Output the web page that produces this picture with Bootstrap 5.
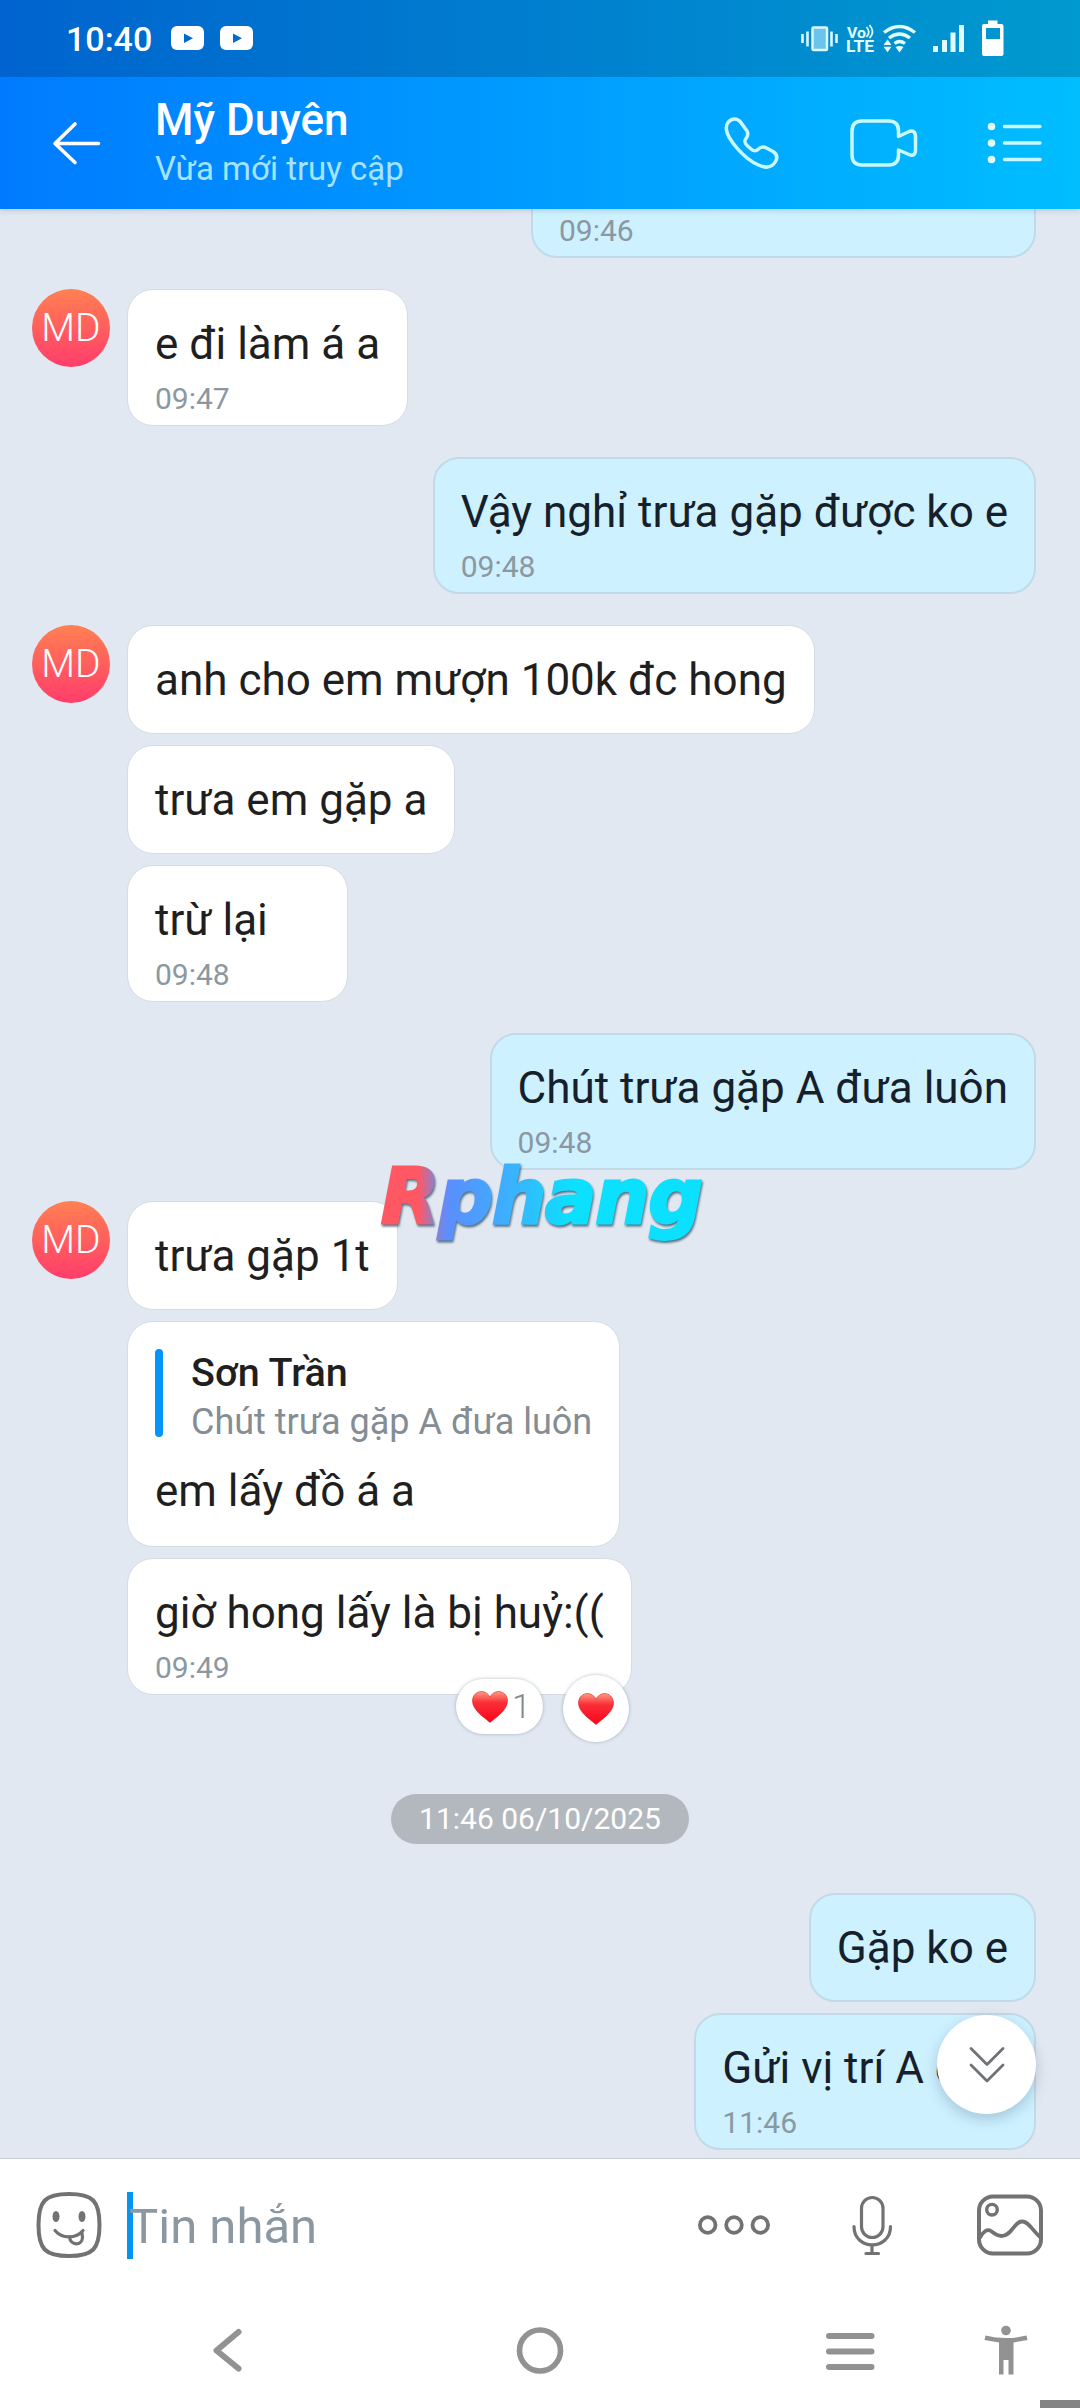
<!DOCTYPE html>
<html lang="vi">
<head>
<meta charset="utf-8">
<meta name="viewport" content="width=device-width, initial-scale=1">
<title>Mỹ Duyên</title>
<link href="https://cdn.jsdelivr.net/npm/bootstrap@5.3.0/dist/css/bootstrap.min.css" rel="stylesheet">
<style>
  body { font-family: Roboto, "Noto Sans", sans-serif; background: #e1e8f1; color: #1f1f1f; }
  svg { display: block; flex: none; overflow: visible; }
  .phone { width: 1080px; height: 2408px; }
  .top-area { background: linear-gradient(90deg, #007bff, #00beff); color: #fff; z-index: 3; box-shadow: 0 1px 6px rgba(60,80,110,.25); }
  .status { height: 77px; background: rgba(0,0,0,.19); padding-left: 66px; }
  .clock { font-size: 34px; font-weight: 500; line-height: 40px; width: 104px; margin-top: 19px; }
  .title-bar { height: 132px; padding-left: 52px; }
  .who { width: 569px; margin-left: 54px; padding-top: 17px; }
  .who-name { font-size: 44px; font-weight: 500; line-height: 53px; }
  .who-seen { font-size: 33px; line-height: 44px; color: #a5e3ff; }
  .chat { padding: 0 44px 0 127px; overflow: hidden; }
  .bubble { background: #fff; border: 1px solid #d5dce4; border-radius: 26px; padding: 21px 27px 0; height: 109px; }
  .bubble.timed { height: 137px; }
  .bubble.quoted { height: 226px; padding-top: 27px; }
  .bubble.mine { background: #cdf1ff; border: 2px solid #c2dae7; padding: 20px 26px 0; color: #16202a; }
  .bubble.cut { width: 505px; height: 150px; margin-top: -101px; }
  .bubble.wide { width: 221px; }
  .say { font-size: 44px; line-height: 66px; white-space: nowrap; }
  .stamp { font-size: 30px; line-height: 36px; margin-top: 4px; color: #8b98a2; }
  .cut .stamp { margin-top: 17px; }
  .group-gap { margin-top: 31px; }
  .near-gap { margin-top: 11px; }
  .far-gap { margin-top: 49px; }
  .face { width: 78px; height: 78px; left: -95px; top: 0; border-radius: 50%; background: linear-gradient(#ff8052, #ff3d6b); color: #fff; font-size: 39px; font-weight: 300; line-height: 78px; }
  .quote-bar { width: 8px; height: 88px; border-radius: 4px; background: #0594fa; margin-right: 28px; }
  .quote-box { margin-bottom: 21px; height: 88px; }
  .quote-name { font-size: 39.5px; font-weight: 500; line-height: 47px; }
  .quote-text { font-size: 36px; line-height: 46px; color: #858d94; white-space: nowrap; margin-top: 3px; }
  .react { background: #fff; box-shadow: 0 0 3px 1px rgba(110,120,135,.3); }
  .react-count { left: 329px; top: 121px; width: 87px; height: 55px; border-radius: 28px; padding-left: 16px; }
  .react-add { left: 436px; top: 117px; width: 66px; height: 67px; border-radius: 50%; }
  .react-num { font-size: 34px; font-weight: 300; color: #888; margin-left: 4px; }
  .day { height: 50px; width: 298px; margin: 99px auto 0 264px; border-radius: 25px; background: #b2b8be; color: #fff; font-size: 30px; line-height: 50px; }
  .watermark { left: 379px; top: 1152px; padding: 0 8px 0 2px; font: italic bold 76px/90px "DejaVu Sans", sans-serif; color: transparent; background: linear-gradient(90deg, #ff5864 0 12%, #8b80d0 17%, #5b8eff 21%, #4d9cff 29%, #35b8ff 43%, #0be0ff 58%); -webkit-background-clip: text; background-clip: text; -webkit-text-stroke: 3px transparent; filter: drop-shadow(1px 2px 1px rgba(50,80,100,.8)); z-index: 4; letter-spacing: -1px; white-space: nowrap; }
  .to-end { left: 937px; top: 2015px; width: 99px; height: 99px; border-radius: 50%; background: #fff; box-shadow: 0 5px 14px rgba(60,90,120,.28); z-index: 4; }
  .to-end:hover { background: #fff; }
  .composer { height: 136px; border-top: 1px solid #c9ced5; background: #fff; padding-left: 36px; z-index: 3; }
  .composer svg, .caret { margin-top: -3px; }
  .caret { width: 6px; height: 67px; background: #0594f0; margin-left: 25px; }
  .hint { font-size: 49px; line-height: 66px; color: #8b98a2; width: 570px; margin-left: -4px; }
  .nav-keys { height: 114px; background: #fff; }
</style>
</head>
<body>
<main class="phone d-flex flex-column position-relative overflow-hidden">
  <header class="top-area position-relative flex-shrink-0">
    <div class="status d-flex">
      <div class="clock">10:40</div>
      <svg width="910" height="77" viewBox="170 0 910 77" fill="#fff">
        <rect x="171" y="26" width="33" height="24" rx="6"/><path d="M184 33.500v9.500l9-4.700z" fill="#0069cf"/>
        <rect x="220" y="26" width="33" height="24" rx="6"/><path d="M233 33.500v9.500l9-4.700z" fill="#006bd0"/>
        <rect x="812.500" y="27.500" width="14.500" height="22.500" rx="1" fill="#6cc4ec" stroke="#dcf8ff" stroke-width="2.500"/>
        <path d="M802.500 34v9M807.500 31.500v15M831.500 31.500v15M836.500 34v9" stroke="#dcf8ff" stroke-width="2.600"/>
        <g fill="#e2fbff" font-family="Roboto, sans-serif" font-weight="700"><text x="847" y="37.500" font-size="15.500" textLength="19" lengthAdjust="spacingAndGlyphs">Vo</text><text x="846" y="52.300" font-size="17" textLength="28" lengthAdjust="spacingAndGlyphs">LTE</text></g>
        <path d="M866.500 27q4.500 5 0 10M869.500 25q6 7 0 13" fill="none" stroke="#e2fbff" stroke-width="1.800"/>
        <g fill="none" stroke="#e2fbff" stroke-width="3.400"><path d="M884 32.500q15.500-12 31 0M889 38q10.500-8 21 0M894.500 43.500q5-4 10.500 0"/></g>
        <path d="M883.500 45l4-5.500 4 5.500zM883.500 46.800h8l-4 5.500zM895.500 47g4-2 8 0l-4 5.500z" fill="none"/>
        <path d="M883.500 45l4-5.500 4 5.500zM883.500 46.800h8l-4 5.500zM895.500 47q4-2 8 0l-4 5.500z" fill="#e2fbff"/>
        <path d="M933 46h5v6h-5zM942 40h5v12h-5zM950.500 32.500h5V52h-5zM959 25h5v27h-5z" fill="#e2fbff"/>
        <path d="M988 20.500h9.500V24h4q2 0 2 2v28q0 2-2 2H984q-2 0-2-2V26q0-2 2-2h4zM986 28v11h14V28z" fill-rule="evenodd"/>
      </svg>
    </div>
    <div class="title-bar d-flex">
      <svg width="49" height="132" viewBox="52 77 49 132" fill="none" stroke="#fff" stroke-width="3.600" stroke-linecap="round" stroke-linejoin="round"><path d="M98.500 143.500H55M75 124L55 143.500 75 162.500"/></svg>
      <div class="who">
        <div class="who-name">Mỹ Duyên</div>
        <div class="who-seen">Vừa mới truy cập</div>
      </div>
      <svg width="320" height="132" viewBox="724 77 320 132" fill="none" stroke="#caf8ff" stroke-width="3.500" stroke-linejoin="round" stroke-linecap="round">
        <path d="M728 122.500C732 118 737 118 740.500 122L747 131C748.500 134 748 136 746 138.500 744 141 744.500 142.500 747 145.500L751 149C754 151.500 756 151.500 758.500 149 761 146.500 763.500 146.500 766.500 148L773 151.500C777.500 154.500 777.500 158 775.500 161.500 772 167.500 766 168.500 758.500 165 744 159 727.500 139 726.500 130 726 127 726.500 124.500 728 122.500z"/>
        <path d="M862 121H888.500Q898.500 121 898.500 131V136.500L909 131.500Q915.500 129.500 915.500 137V149.500Q915.500 157 909 154.500L898.500 150V155Q898.500 165 888.500 165H862Q852 165 852 155V131Q852 121 862 121z"/>
        <path d="M1004.500 126.500h35.500M1004.500 143h35.500M1004.500 159.500h35.500"/>
        <g fill="#e2fbff" stroke="none"><circle cx="991.500" cy="126.500" r="3.800"/><circle cx="991.500" cy="143" r="3.800"/><circle cx="991.500" cy="159.500" r="3.800"/></g>
      </svg>
    </div>
  </header>

  <section class="chat flex-grow-1 d-flex flex-column align-items-start">
    <div class="bubble mine cut align-self-end flex-shrink-0"><div class="say">&nbsp;</div><div class="stamp">09:46</div></div>

    <div class="position-relative group-gap">
      <div class="face position-absolute text-center">MD</div>
      <div class="bubble timed"><div class="say">e đi làm á a</div><div class="stamp">09:47</div></div>
    </div>

    <div class="bubble mine timed group-gap align-self-end"><div class="say">Vậy nghỉ trưa gặp được ko e</div><div class="stamp">09:48</div></div>

    <div class="position-relative group-gap">
      <div class="face position-absolute text-center">MD</div>
      <div class="bubble"><div class="say">anh cho em mượn 100k đc hong</div></div>
    </div>
    <div class="bubble near-gap"><div class="say">trưa em gặp a</div></div>
    <div class="bubble timed wide near-gap"><div class="say">trừ lại</div><div class="stamp">09:48</div></div>

    <div class="bubble mine timed group-gap align-self-end"><div class="say">Chút trưa gặp A đưa luôn</div><div class="stamp">09:48</div></div>

    <div class="position-relative group-gap">
      <div class="face position-absolute text-center">MD</div>
      <div class="bubble"><div class="say">trưa gặp 1t</div></div>
    </div>
    <div class="bubble quoted near-gap">
      <div class="quote-box d-flex">
        <div class="quote-bar"></div>
        <div><div class="quote-name">Sơn Trần</div><div class="quote-text">Chút trưa gặp A đưa luôn</div></div>
      </div>
      <div class="say">em lấy đồ á a</div>
    </div>
    <div class="position-relative near-gap">
      <div class="bubble timed"><div class="say">giờ hong lấy là bị huỷ:((</div><div class="stamp">09:49</div></div>
      <div class="react react-count position-absolute d-flex align-items-center">
        <svg width="36" height="32" viewBox="0 0 36 32"><defs><linearGradient id="love" x1="0" y1="0" x2="0" y2="1"><stop offset="0" stop-color="#ff9c80"/><stop offset=".35" stop-color="#f9303a"/><stop offset="1" stop-color="#ff0018"/></linearGradient></defs><path id="heart" d="M18 31.500C13 27 .5 19.500.5 10 .5 4 5 .5 9.500.5 13 .5 16.500 3 18 6 19.500 3 23 .5 26.500.5 31 .5 35.500 4 35.500 10 35.500 19.500 23 27 18 31.500z" fill="url(#love)" stroke="#d8202c" stroke-width=".6"/></svg>
        <span class="react-num">1</span>
      </div>
      <div class="react react-add position-absolute d-flex align-items-center justify-content-center">
        <svg width="36" height="32" viewBox="0 0 36 32"><use href="#heart"/></svg>
      </div>
    </div>

    <div class="day text-center">11:46 06/10/2025</div>

    <div class="bubble mine far-gap align-self-end"><div class="say">Gặp ko e</div></div>
    <div class="bubble mine timed near-gap align-self-end"><div class="say">Gửi vị trí A qua</div><div class="stamp">11:46</div></div>
  </section>

  <div class="watermark position-absolute">Rphang</div>
  <button type="button" class="to-end btn p-0 border-0 position-absolute d-flex align-items-center justify-content-center" aria-label="Xuống cuối">
    <svg width="36" height="38" viewBox="0 0 36 38" fill="none" stroke="#6f7276" stroke-width="2.800" stroke-linecap="round" stroke-linejoin="round"><path d="M2 2.500L18 18.500 34 2.500M2 19L18 35 34 19"/></svg>
  </button>

  <footer class="flex-shrink-0 position-relative">
    <div class="composer d-flex align-items-center">
      <svg width="66" height="68" viewBox="36 2192 66 68" fill="none" stroke="#727272" stroke-width="4" stroke-linecap="round">
        <path d="M69 2195C93 2195 99.500 2202 99.500 2226S93 2257 69 2257 38.500 2250 38.500 2226 45 2195 69 2195z"/>
        <path d="M55 2231.500C62 2240 76 2240 83 2231.500" stroke-width="3.200"/><path d="M69.500 2238C70.500 2247 82 2247 82.500 2238.500L82 2234" stroke-width="3.200"/>
        <g fill="#727272" stroke="none"><ellipse cx="56" cy="2217.500" rx="3.500" ry="5.600"/><ellipse cx="82" cy="2217.500" rx="3.500" ry="5.600"/></g>
      </svg>
      <div class="caret"></div>
      <div class="hint">Tin nhắn</div>
      <svg width="347" height="68" viewBox="700 2192 347 68" fill="none" stroke="#727272" stroke-width="3.800" stroke-linecap="round" stroke-linejoin="round">
        <circle cx="708.700" cy="2226" r="7.800"/><circle cx="735" cy="2226" r="7.800"/><circle cx="761.300" cy="2226" r="7.800"/>
        <rect x="862.500" y="2198.500" width="21.500" height="40" rx="10.700" stroke-width="3.200"/>
        <path d="M855 2227.500C855 2252 891.500 2252 891.500 2227.500M873 2247v7.500M867 2254.500h12.500" stroke-width="3.200"/>
        <rect x="980" y="2197.500" width="62" height="57" rx="14" stroke-width="4"/><circle cx="993" cy="2210.700" r="5.300" stroke-width="3.400"/>
        <path d="M981 2238.500C984 2233 988 2229.500 992 2232 996 2235 998 2237 1002.500 2237 1013 2237 1015 2222 1023.500 2222.500 1030 2223 1033 2231 1041 2238"/>
      </svg>
    </div>
    <div class="nav-keys">
      <svg width="1080" height="114" viewBox="0 2294 1080 114" fill="none" stroke="#929292" stroke-width="6" stroke-linecap="round" stroke-linejoin="round">
        <path d="M238.500 2332L216.500 2350.500 238.500 2368.500"/>
        <circle cx="540" cy="2350.500" r="20.500" stroke-width="5.600"/>
        <path d="M829 2336h42.500M829 2351.500h42.500M829 2367h42.500"/>
        <g fill="#929292" stroke="none"><circle cx="1006" cy="2330.500" r="4.800"/><path d="M985.500 2335.500Q1006 2340.500 1026.500 2335.500L1027.500 2340 1013.500 2342.500V2374.500H1008.500V2360H1003.500V2374.500H999V2342.500L984.500 2340z"/><path fill="#848484" d="M1040 2400h40v8h-40z"/></g>
      </svg>
    </div>
  </footer>
</main>
<script src="https://cdn.jsdelivr.net/npm/bootstrap@5.3.0/dist/js/bootstrap.bundle.min.js"></script>
</body>
</html>
